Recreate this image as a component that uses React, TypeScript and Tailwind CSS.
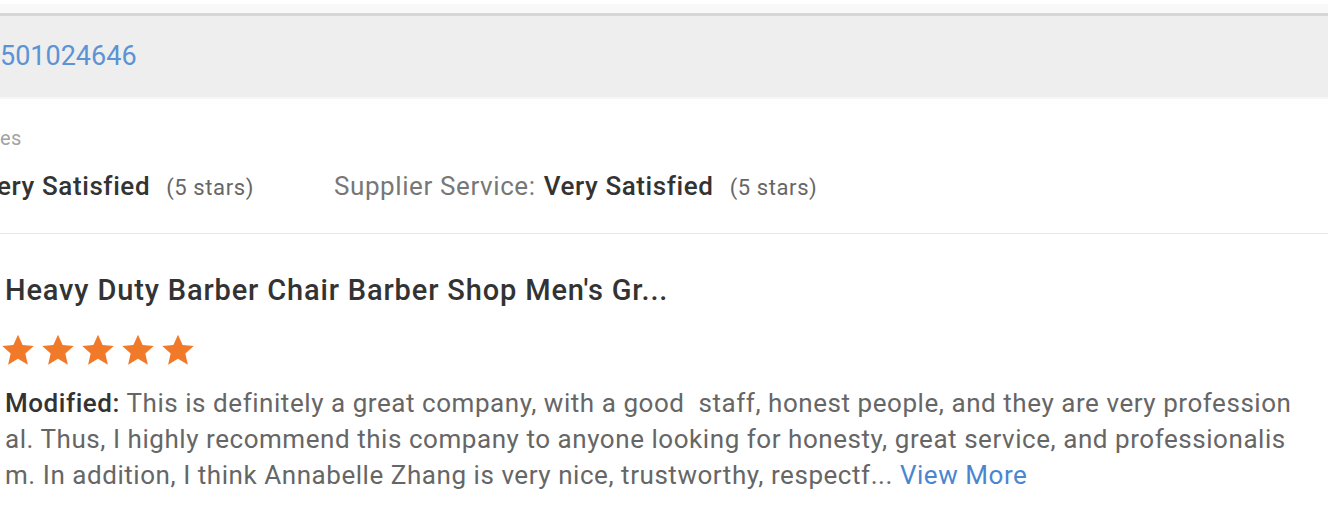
import React from 'react';

function Star() {
  return (
    <svg viewBox="0 0 24 24" className="w-[36px] h-[36px]" fill="#f07a2a">
      <path d="M12 1.8l3.1 6.9 7.4.7-5.6 5 1.7 7.4L12 17.9l-6.6 3.9 1.7-7.4-5.6-5 7.4-.7z" />
    </svg>
  );
}

export default function App() {
  return (
    <div className="w-[1328px] h-[518px] overflow-hidden bg-white font-['Roboto',sans-serif]">
      {/* top strip */}
      <div className="h-[4px] bg-white" />
      <div className="h-[9px] bg-[#f8f8f8]" />
      <div className="h-[3px] bg-[#d6d6d6]" />
      <div className="h-[81px] bg-[#eeeeee] flex items-center">
        <span className="text-[27px] text-[#5b93d4] leading-none">501024646</span>
      </div>
      <div className="h-[2px] bg-[#f6f6f6]" />

      {/* ratings */}
      <div className="pt-[29px] h-[135px] border-b border-[#e8e8e8]">
        <div className="text-[20px] tracking-[0.5px] text-[#a3a3a3] leading-none">es</div>
        <div className="mt-[25px] flex items-baseline text-[26px] tracking-[0.6px] leading-none">
          <span className="font-medium text-[#333] ml-[-3px]">ery Satisfied</span>
          <span className="ml-[16px] text-[22px] text-[#666]">(5 stars)</span>
          <span className="ml-[80px] text-[#777]">Supplier Service:</span>
          <span className="ml-[8px] font-medium text-[#333]">Very Satisfied</span>
          <span className="ml-[16px] text-[22px] text-[#666]">(5 stars)</span>
        </div>
      </div>

      {/* review */}
      <div className="pl-[5px] pt-[42px]">
        <div className="text-[29px] tracking-[0.85px] font-medium text-[#333] leading-none">
          Heavy Duty Barber Chair Barber Shop Men's Gr...
        </div>
        <div className="mt-[27px] ml-[-5px] flex gap-[4px]">
          <Star />
          <Star />
          <Star />
          <Star />
          <Star />
        </div>
        <p className="mt-[17px] w-[1292px] text-[26px] tracking-[0.55px] leading-[36px] text-[#666] break-all">
          <span className="font-medium text-[#333]">Modified:</span> This is definitely a great company, with a good&nbsp; staff, honest people, and they are very professional. Thus, I highly recommend this company to anyone looking for honesty, great service, and professionalism. In addition, I think Annabelle Zhang is very nice, trustworthy, respectf...{' '}
          <span className="text-[#4a86d0]">View More</span>
        </p>
      </div>
    </div>
  );
}
